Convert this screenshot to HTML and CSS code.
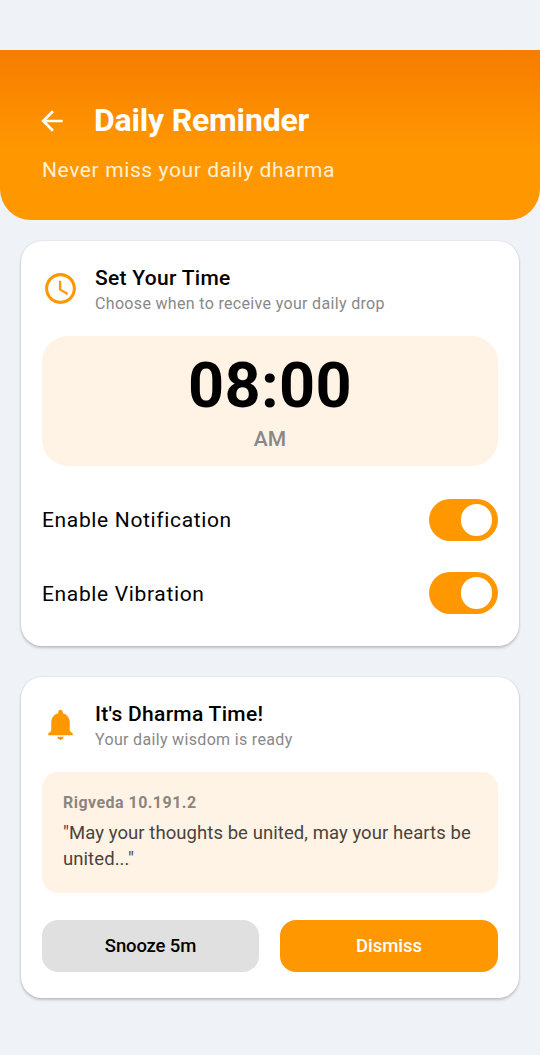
FILE: index.html
```html
<!DOCTYPE html>
<html lang="en"><head><meta charset="utf-8"><title>Daily Reminder</title><link rel="stylesheet" href="styles.css"></head>
<body>
<header class="hero">
<div class="hero-row"><svg class="back" viewBox="0 0 24 24"><path d="M20 11H7.83l5.59-5.59L12 4l-8 8 8 8 1.41-1.41L7.83 13H20v-2z"/></svg><h1>Daily Reminder</h1></div>
<p class="hero-sub">Never miss your daily dharma</p>
</header>
<main>
<section class="card time-card">
<div class="head"><svg class="icon" viewBox="0 0 24 24"><path d="M11.99 2C6.47 2 2 6.48 2 12s4.47 10 9.99 10C17.52 22 22 17.52 22 12S17.52 2 11.99 2zM12 20c-4.42 0-8-3.58-8-8s3.58-8 8-8 8 3.58 8 8-3.58 8-8 8zm.5-13H11v6l5.25 3.15.75-1.23-4.5-2.67V7z"/></svg><div><h2>Set Your Time</h2><p class="sub">Choose when to receive your daily drop</p></div></div>
<div class="clock"><div class="digits">08:00</div><div class="ampm">AM</div></div>
<div class="row"><span>Enable Notification</span><div class="switch"></div></div>
<div class="row second"><span>Enable Vibration</span><div class="switch"></div></div>
</section>
<section class="card note-card">
<div class="head"><svg class="icon" viewBox="0 0 24 24"><path d="M12 22c1.1 0 2-.9 2-2h-4c0 1.1.89 2 2 2zm6-6v-5c0-3.07-1.64-5.64-4.5-6.32V4c0-.83-.67-1.5-1.5-1.5s-1.5.67-1.5 1.5v.68C7.63 5.36 6 7.92 6 11v5l-2 2v1h16v-1l-2-2z"/></svg><div><h2>It's Dharma Time!</h2><p class="sub">Your daily wisdom is ready</p></div></div>
<div class="quote"><p class="source">Rigveda 10.191.2</p><p class="text">"May your thoughts be united, may your hearts be united..."</p></div>
<div class="actions"><button class="btn snooze">Snooze 5m</button><button class="btn dismiss">Dismiss</button></div>
</section>
</main>
</body></html>
```
FILE: styles.css
```css
* { box-sizing: border-box; margin: 0; }
body { padding-top: 50px; height: 1055px; background: #eff3f8; font-family: Roboto, sans-serif; color: #000; overflow: hidden; }
.hero { height: 170px; padding: 49px 36px 0; border-radius: 0 0 31px 31px; background: linear-gradient(#f77c00, #ff9800 60%); color: #fff; }
.hero-row { display: flex; align-items: center; height: 42px; }
.back { width: 32px; height: 32px; fill: #fff; margin: 1px 26px 0 0; }
h1 { font-size: 32px; line-height: 42px; font-weight: 700; letter-spacing: -.2px; white-space: nowrap; }
.hero-sub { margin: 15px 0 0 6px; font-size: 21px; line-height: 28px; letter-spacing: .61px; color: #fff0d9; }
main { padding: 21px 21px 0; }
.card { background: #fff; border-radius: 21px; padding: 20px 21px 21px; box-shadow: 0 2px 3px rgba(0,0,0,.2), 0 0 2px rgba(0,0,0,.14); }
.time-card { height: 405px; }
.note-card { height: 321px; margin-top: 31px; }
.head { display: flex; height: 54px; align-items: center; }
.icon { width: 37px; height: 37px; fill: #ff9800; margin: 1px 16.5px 0 -.5px; }
h2 { font-size: 21px; line-height: 28px; font-weight: 500; letter-spacing: .29px; margin-top: 2px; }
.sub { font-size: 16px; line-height: 20px; letter-spacing: .33px; color: #888; margin-top: 2px; }
.clock { height: 130px; margin-top: 21px; border-radius: 26px; background: #fff3e5; text-align: center; padding-top: 15px; }
.digits { font-size: 63px; font-weight: 700; line-height: 70px; letter-spacing: .3px; }
.ampm { font-size: 21px; font-weight: 500; line-height: 28px; color: #888; margin-top: 4px; }
.row { display: flex; justify-content: space-between; align-items: center; height: 42px; margin-top: 33px; font-size: 21px; letter-spacing: .65px; }
.second { margin-top: 31px; }
.second span { padding-top: 1px; }
.switch { width: 69px; height: 42px; border-radius: 21px; background: #ff9800; padding: 5px 6px; display: flex; align-items: center; justify-content: flex-end; }
.switch::after { content: ""; width: 31.5px; height: 31.5px; border-radius: 50%; background: #fff; }
.quote { height: 121px; margin-top: 21px; padding: 21px; border-radius: 16px; background: #fff3e5; }
.source { font-size: 16px; line-height: 20px; font-weight: 700; letter-spacing: .46px; color: #8b8580; }
.text { font-size: 18.5px; line-height: 26px; letter-spacing: .07px; color: #4a433c; margin-top: 7px; }
.actions { display: flex; gap: 21px; margin-top: 27px; }
.btn { flex: 1; height: 52px; border: 0; border-radius: 16px; font: 500 18.5px Roboto, sans-serif; letter-spacing: -.15px; }
.snooze { flex: 0 0 217px; background: #e0e0e0; color: #000; }
.dismiss { background: #ff9800; color: #fff; letter-spacing: 0; }
```
